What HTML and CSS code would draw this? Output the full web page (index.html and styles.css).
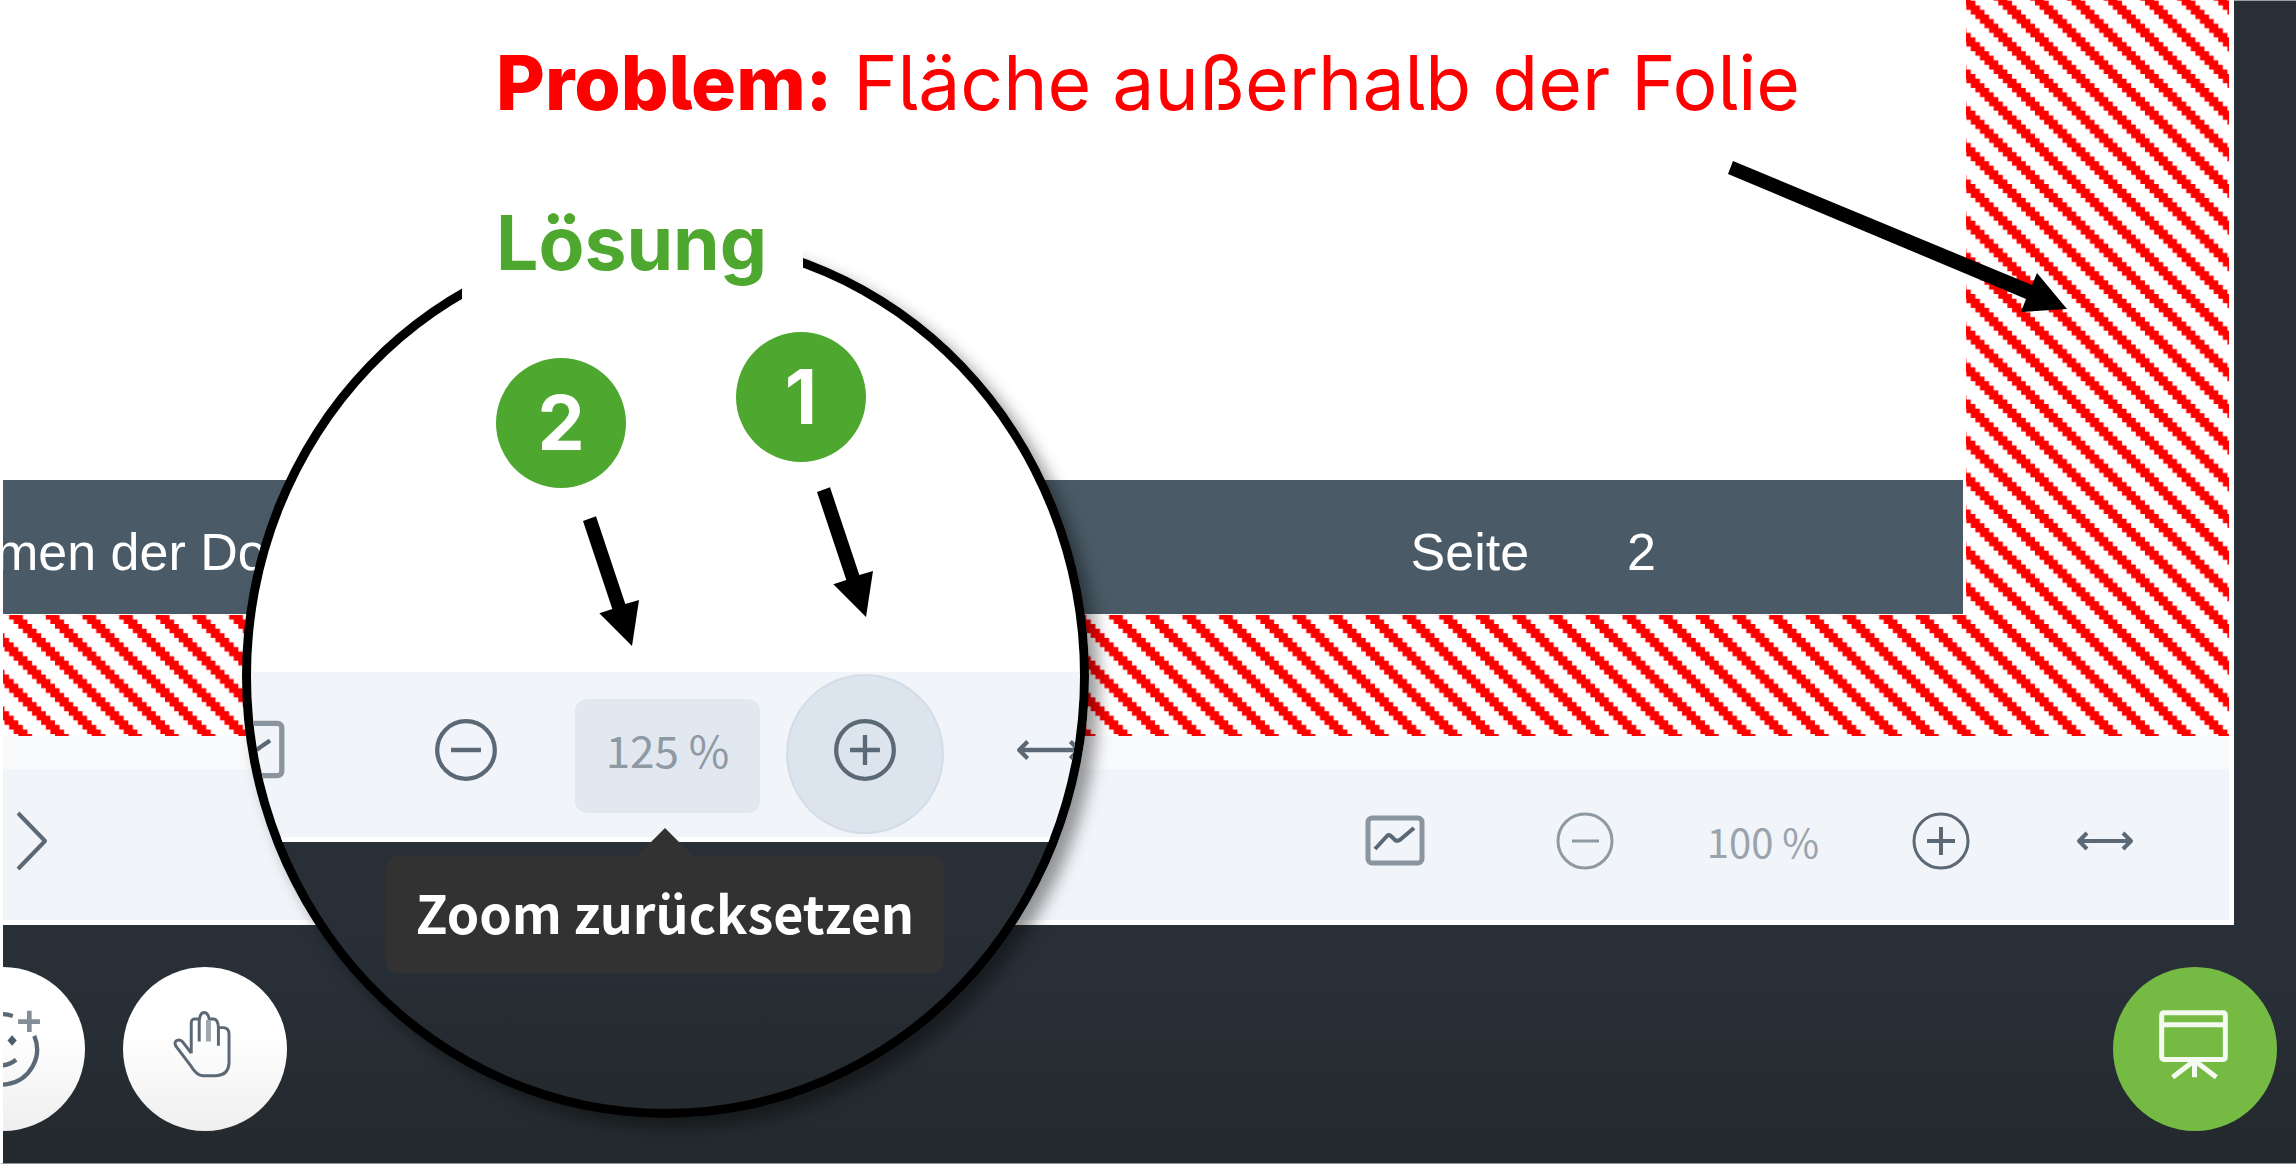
FILE: index.html
```html
<!DOCTYPE html>
<html lang="de">
<head>
<meta charset="utf-8">
<title>Zoom zurücksetzen</title>
<link rel="stylesheet" href="styles.css">
</head>
<body>
<main class="shell">
  <section class="window">
    <div class="canvas">
      <svg class="hatch" aria-hidden="true">
        <defs>
          <pattern id="stripes" width="8" height="8" patternUnits="userSpaceOnUse" patternTransform="translate(15.3 .7) scale(4.5833)">
            <path fill="#f00" d="M0 0h3v1h1v1h1v1h1v1h1v1h1v3h-1v-1h-1v-1h-1v-1h-1v-1h-1v-1h-1v-1h-1v-1h-1zM0 6h1v1h1v1h-2z"/>
          </pattern>
        </defs>
        <rect width="100%" height="100%" fill="#fff"/>
        <rect width="100%" height="100%" fill="url(#stripes)"/>
      </svg>
      <article class="slide">
        <h1 class="headline problem"><strong>Problem:</strong> Fläche außerhalb der Folie</h1>
        <footer class="slide-footer">
          <span class="footer-title">men der Do</span>
          <span class="footer-page">Seite</span>
          <span>2</span>
        </footer>
      </article>
    </div>
    <div class="canvas-edge"></div>
    <div class="toolbar">
      <button class="tool next" aria-label="Nächste Folie"><svg width="60" height="60" viewBox="0 0 60 60"><path d="M15 2L42 30L15 58" stroke-width="4"/></svg></button>
      <button class="tool chart" aria-label="Diagramm"><svg width="60" height="60" viewBox="0 0 60 60"><rect x="3" y="7" width="54" height="45" rx="4" stroke="#8a95a0" stroke-width="5"/><path d="M10 38L22 25Q24 23 27 26L30 29Q33 31 36 28L49 17" stroke-width="4"/></svg></button>
      <button class="tool minus" aria-label="Verkleinern"><svg width="60" height="60" viewBox="0 0 60 60"><circle cx="30" cy="30" r="27" stroke-width="3"/><path d="M17 30h27" stroke-width="3"/></svg></button>
      <button class="tool percent">100 %</button>
      <button class="tool plus" aria-label="Vergrößern"><svg width="60" height="60" viewBox="0 0 60 60"><circle cx="30" cy="30" r="27" stroke-width="3"/><path d="M16 30h28M30 16v28" stroke-width="4"/></svg></button>
      <button class="tool fit" aria-label="An Breite anpassen"><svg width="60" height="60" viewBox="0 0 60 60"><path d="M4 30h52M12 22l-8 8 8 8M48 22l8 8-8 8" stroke-width="4"/></svg></button>
    </div>
  </section>

  <nav class="dock">
    <button class="round smile" aria-label="Reaktion"><svg viewBox="-235 140 495 495"><path d="M42 288A106 106 0 1 0 107 348" stroke-width="13"/><path d="M-38 420Q8 454 52 420" stroke-width="13"/><path d="M40 346l14 16-14 16-14-16z" fill="#4e5a66" stroke="none"/><path d="M58 305h66M92 272v64" stroke="#848c96" stroke-width="14"/></svg></button>
    <button class="round" aria-label="Hand heben"><svg viewBox="370 140 495 495"><path d="M576 400V308Q577 296 588 297H601Q603 278 615 277Q627 278 630 297H644Q657 298 658 323H674Q690 325 690 342V430Q688 466 652 468H612Q592 467 576 440L532 382Q522 368 532 362Q541 358 550 366L576 400M600 297V365M658 320V378" stroke-width="9"/><path d="M628 300V365" stroke="#a0a7af" stroke-width="15"/></svg></button>
    <button class="round present" aria-label="Präsentation"><svg viewBox="0 0 165 165"><rect x="49" y="46" width="64" height="47" rx="2" stroke-width="5"/><path d="M49 58h64M82 94L60 111M82 94v17M82 94l22 17" stroke-width="5"/></svg></button>
  </nav>

  <svg class="arrow arrow-problem" width="344" height="156" viewBox="1726 158 344 156" aria-hidden="true"><path d="M1733 161L2032 285L2037 273L2067 309L2021 312L2026 299L1728 174Z"/></svg>

  <aside class="solution">
    <div class="lens">
      <div class="lens-slide"></div>
      <div class="lens-toolbar">
        <button class="tool lens-chart" aria-label="Diagramm vergrößert"><svg width="64" height="64" viewBox="0 0 60 60"><rect x="3" y="5" width="54" height="49" rx="4" stroke="#8a95a0" stroke-width="5"/><path d="M10 38L22 25Q24 23 27 26L30 29Q33 31 36 28L46 21" stroke-width="4"/></svg></button>
        <button class="tool" aria-label="Zoom verkleinern"><svg width="64" height="64" viewBox="0 0 60 60"><circle cx="30" cy="30" r="27" stroke-width="4"/><path d="M16 30h28" stroke-width="4"/></svg></button>
        <button class="tool lens-percent">125 %</button>
        <button class="tool lens-plus" aria-label="Zoom vergrößern"><svg width="64" height="64" viewBox="0 0 60 60"><circle cx="30" cy="30" r="27" stroke-width="4"/><path d="M16 30h28M30 16v28" stroke-width="4"/></svg></button>
        <button class="tool lens-fit" aria-label="Breite anpassen"><svg width="64" height="64" viewBox="0 0 60 60"><path d="M2 30h56M10 22l-8 8 8 8M50 22l8 8-8 8" stroke-width="4"/></svg></button>
      </div>
      <div class="tooltip" role="tooltip">Zoom zurücksetzen</div>
    </div>
    <h2 class="headline solution-title">Lösung</h2>
    <span class="badge badge-two">2</span>
    <span class="badge badge-one">1</span>
    <svg class="arrow arrow-steps" width="340" height="190" viewBox="0 0 1020 570" aria-hidden="true"><path d="M69 153L108 139L196 402L237 390L216 528L118 430L157 417ZM771 66L810 52L898 315L939 303L918 441L820 343L859 330Z"/></svg>
  </aside>
</main>
</body>
</html>
```
FILE: styles.css
```css
* { box-sizing: border-box; }

body {
  margin: 0;
  background: #fff;
  font-family: "Noto Sans CJK SC", "Noto Sans", sans-serif;
}

button {
  margin: 0;
  padding: 0;
  border: 0;
  background: none;
  font: inherit;
  color: inherit;
}

svg { display: block; }

.shell {
  position: relative;
  min-height: 100vh;
  display: flex;
  flex-direction: column;
  overflow: hidden;
  border-left: 3px solid #fff;
  border-bottom: 1px solid #8e9395;
  background:
    linear-gradient(#9b9fa1, #9b9fa1) top / 100% 1px no-repeat,
    linear-gradient(#282f37 85%, #23292c);
}

/* presentation window */
.window {
  margin-right: 62px;
  border: solid #fff;
  border-width: 0 5px 5px 0;
  background: #f1f5f9;
}

.canvas {
  position: relative;
  padding: 0 263px 121px 0;
}

.hatch {
  position: absolute;
  inset: 0;
  width: 100%;
  height: 100%;
}

.slide {
  position: relative;
  border-right: 3px solid #fff;
  border-bottom: 1px solid #fff;
  background: #fff;
}

.headline {
  margin: 0;
  font-family: Inter, "Open Sans", sans-serif;
  font-feature-settings: "cv05";
  font-size: 75px;
  line-height: 110px;
  font-weight: 400;
  white-space: nowrap;
}

.problem {
  padding: 28px 0 342px 493px;
  color: #f00;
}

.problem strong { font-weight: 800; }

.slide-footer {
  display: flex;
  align-items: center;
  height: 134px;
  padding: 10px 307px 0 0;
  overflow: hidden;
  background: #4a5b67;
  color: #fff;
  font-family: "Liberation Sans", Arial, sans-serif;
  font-size: 52px;
  line-height: 60px;
  white-space: nowrap;
}

.footer-title { margin-left: -8px; }

.footer-page {
  margin-left: auto;
  margin-right: 98px;
}

.canvas-edge {
  height: 33px;
  background: #f9fafc;
}

.toolbar {
  display: flex;
  align-items: center;
  height: 151px;
  padding: 0 94px 8px 0;
}

.tool {
  flex: none;
  color: #5b6875;
}

.tool svg,
.round svg {
  fill: none;
  stroke: #5b6875;
  stroke-linejoin: round;
}

.next { margin-right: auto; }

.chart { margin-right: 130px; }

.minus { opacity: .65; }

.percent {
  width: 116px;
  margin: 0 90px;
  color: #9aa3ac;
  font-size: 40px;
  line-height: 60px;
  white-space: nowrap;
}

.fit { margin-left: 104px; }

/* round action buttons */
.dock {
  display: flex;
  flex: 1;
  gap: 38px;
  padding: 42px 19px 31px 0;
}

.round {
  flex: none;
  width: 164px;
  height: 164px;
  border-radius: 50%;
  background: linear-gradient(#fff 40%, #efefef);
}

.smile { margin-left: -82px; }

.present {
  margin-left: auto;
  background: #75ba43;
}

.present svg { stroke: #f4faf0; }

/* annotations lying over the window */
.arrow {
  position: absolute;
  fill: #000;
}

.arrow-problem {
  top: 158px;
  right: 226px;
}

.solution {
  position: absolute;
  top: 234px;
  left: 239px;
  width: 847px;
  height: 884px;
}

.lens {
  height: 100%;
  overflow: hidden;
  border: 9px solid #000;
  border-radius: 50%;
  background: linear-gradient(#282f37 80%, #23292c);
  box-shadow: 10px 10px 16px rgba(0, 0, 0, .4);
}

.lens-slide {
  height: 429px;
  background: #fff;
}

.lens-toolbar {
  display: flex;
  align-items: center;
  width: 880px;
  height: 170px;
  margin-left: -30px;
  padding-bottom: 10px;
  border-bottom: 5px solid #fff;
  background: #f1f5f9;
}

.lens-chart { margin-right: 149px; }

.lens-percent {
  width: 185px;
  height: 114px;
  margin: 12px 26px 0 77px;
  padding-bottom: 14px;
  border-radius: 12px;
  background: #e2e8f0;
  color: #8f99a4;
  font-size: 44px;
  line-height: 60px;
}

.lens-plus {
  display: grid;
  place-items: center;
  width: 158px;
  height: 160px;
  margin-top: 8px;
  padding-bottom: 8px;
  border: 2px solid #d3dce7;
  border-radius: 50%;
  background: #dce4ee;
}

.lens-fit { margin-left: 73px; }

.tooltip {
  position: absolute;
  top: 622px;
  left: 144px;
  width: 558px;
  height: 117px;
  border-radius: 12px;
  background: #323232;
  color: #fff;
  font-size: 52px;
  font-weight: 700;
  line-height: 111px;
  text-align: center;
  white-space: nowrap;
}

.tooltip::before {
  content: "";
  position: absolute;
  top: -28px;
  left: 250px;
  border: solid transparent;
  border-width: 0 29px 29px;
  border-bottom-color: #323232;
}

.solution-title {
  position: absolute;
  top: -46px;
  left: 220px;
  width: 341px;
  height: 114px;
  padding-left: 34px;
  background: #fff;
  color: #4ea72e;
  font-weight: 700;
}

.badge {
  position: absolute;
  width: 130px;
  height: 130px;
  border-radius: 50%;
  background: #4ea72e;
  color: #fff;
  font-family: Inter, "Open Sans", sans-serif;
  font-size: 75px;
  font-weight: 700;
  line-height: 130px;
  text-align: center;
}

.badge-two {
  top: 124px;
  left: 254px;
}

.badge-one {
  top: 98px;
  left: 494px;
}

.arrow-steps {
  top: 236px;
  left: 318px;
}
```
